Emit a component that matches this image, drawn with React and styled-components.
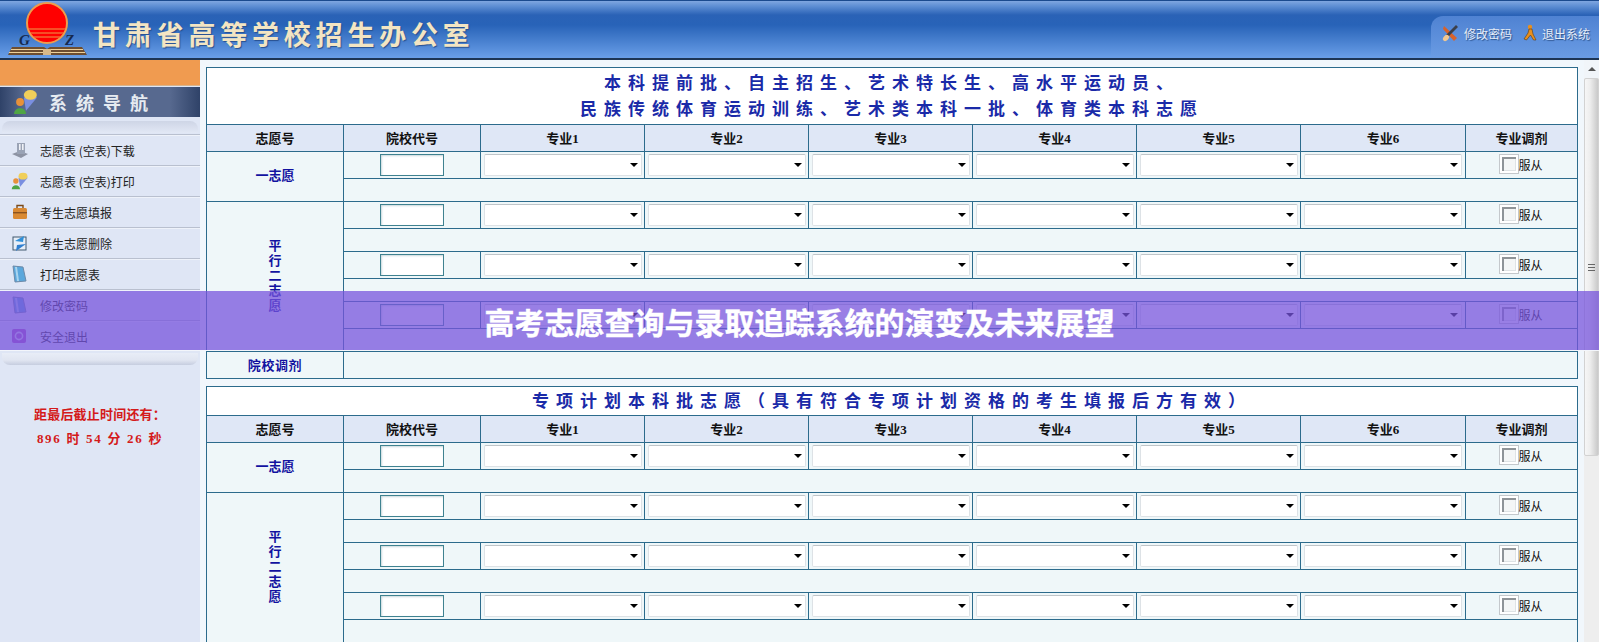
import React from 'react'
import styled, { createGlobalStyle } from 'styled-components'

const GlobalStyle = createGlobalStyle`
html, body {
    margin: 0;
    padding: 0;
    background: #f1f7fc;
}
* {
    box-sizing: border-box;
}
`

const CJK = `"Noto Sans CJK SC", "Liberation Sans", sans-serif`
const SERIF_CJK = `"Liberation Serif", "Noto Sans CJK SC", serif`

const menuItems = [
    { label: '志愿表 (空表)下载', icon: 'disk' },
    { label: '志愿表 (空表)打印', icon: 'people' },
    { label: '考生志愿填报', icon: 'case' },
    { label: '考生志愿删除', icon: 'refresh' },
    { label: '打印志愿表', icon: 'book' },
    { label: '修改密码', icon: 'book' },
    { label: '安全退出', icon: 'power' },
]

const COL_WIDTHS = [137, 137, 164, 164, 164, 164, 164, 165, 112]
const MAJORS = [1, 2, 3, 4, 5, 6]

const Logo = () => (
    <svg width="92" height="58" viewBox="0 0 92 58">
        <defs>
            <clipPath id="sun"><circle cx="47" cy="22" r="19" /></clipPath>
        </defs>
        <circle cx="47" cy="22" r="20" fill="#f00" stroke="#ee9c4c" strokeWidth="2" />
        <g clipPath="url(#sun)" stroke="#ee9c4c" strokeWidth="1.2">
            <line x1="20" y1="28" x2="75" y2="28" />
            <line x1="20" y1="32" x2="75" y2="32" />
            <line x1="20" y1="36" x2="75" y2="36" />
        </g>
        <text x="19" y="44" fontFamily="Liberation Serif" fontWeight="bold" fontStyle="italic" fontSize="15" fill="#16294d">G</text>
        <text x="65" y="44" fontFamily="Liberation Serif" fontWeight="bold" fontStyle="italic" fontSize="15" fill="#16294d">Z</text>
        <path d="M12 46 L44 46 L47 48 L50 46 L82 46 L87 54 L8 54 Z" fill="#6e4e30" />
        <path d="M11 48.5 H83 M9 51.5 H85" stroke="#ecd09a" strokeWidth="1" />
        <rect x="43" y="48" width="8" height="6" fill="#d8b888" />
    </svg>
)

const ToolsIcon = () => (
    <svg width="18" height="18" viewBox="0 0 18 18">
        <path d="M3 2 L16 14 L13 17 L2 5 Z" fill="#d9622a" />
        <path d="M15 1 L17 3 L7 13 L5 11 Z" fill="#3b3f4a" />
        <ellipse cx="5" cy="14" rx="3.5" ry="2.5" fill="#f2c890" transform="rotate(-45 5 14)" />
    </svg>
)

const RunnerIcon = () => (
    <svg width="14" height="18" viewBox="0 0 14 18">
        <circle cx="7" cy="3" r="2.2" fill="#e88f1e" />
        <path d="M6 5 L9 5 L10 10 L13 16 L10.5 16 L7.5 11 L3.5 16 L1 15 L5 9 Z" fill="#e88f1e" stroke="#5a3a10" strokeWidth=".6" />
    </svg>
)

const PeopleIcon = ({ size = 18 }) => (
    <svg width={size} height={size} viewBox="0 0 24 24">
        <path d="M10 8 L19 3 L22 8 L12 20 Z" fill="#7a8fe0" />
        <ellipse cx="16" cy="5.5" rx="6" ry="4.5" fill="#f0cf5a" />
        <circle cx="6.5" cy="12" r="3.6" fill="#e8913a" />
        <path d="M1 23 C1 16 12 16 12 23 Z" fill="#4fa544" />
    </svg>
)

const MenuIcon = ({ type }) => {
    if (type === 'people') return <PeopleIcon />
    if (type === 'disk') {
        return (
            <svg width="18" height="18" viewBox="0 0 18 18">
                <path d="M1 13 L9 10 L17 13 L10 17 Z" fill="#8d93a3" />
                <rect x="6" y="2" width="8" height="11" fill="#9aa3b5" />
                <rect x="8" y="3" width="1.6" height="6" fill="#eef1f6" />
                <rect x="11" y="3" width="1.6" height="6" fill="#eef1f6" />
            </svg>
        )
    }
    if (type === 'case') {
        return (
            <svg width="18" height="18" viewBox="0 0 18 18">
                <path d="M6 5 V2.5 H12 V5" fill="none" stroke="#7c4a18" strokeWidth="1.4" />
                <rect x="2" y="5" width="14" height="11" rx="1.5" fill="#d98a34" />
                <rect x="2" y="9" width="14" height="1.4" fill="#8a5320" />
            </svg>
        )
    }
    if (type === 'refresh') {
        return (
            <svg width="18" height="18" viewBox="0 0 18 18">
                <rect x="2" y="3" width="13" height="13" fill="#e6eef8" stroke="#40586f" />
                <path d="M4 7 L13 2 L12 8 Z" fill="#2f8fd8" />
                <path d="M15 10 L5 17 L6 11 Z" fill="#2f7fd0" />
            </svg>
        )
    }
    if (type === 'power') {
        return (
            <svg width="16" height="16" viewBox="0 0 16 16">
                <rect x="1" y="1" width="14" height="14" rx="2" fill="#b04fc0" />
                <circle cx="8" cy="8" r="3.6" fill="none" stroke="#e6d8f0" strokeWidth="1.6" />
            </svg>
        )
    }
    return (
        <svg width="16" height="18" viewBox="0 0 16 18">
            <path d="M2 1 L12 2 L15 16 L4 17 Z" fill="#5aa7dc" stroke="#6d8aa8" />
            <path d="M4 2 L6 2 L8 16 L6 16 Z" fill="#a9d5f0" />
        </svg>
    )
}

const VolunteerRow = ({ label, rows }) => (
    <>
        <HeadRow>
            {label && <LabelCell rowSpan={rows}>{label}</LabelCell>}
            <Cell><CodeInput type="text" /></Cell>
            {MAJORS.map((m) => (
                <Cell key={m}>
                    <SelectBox><select /></SelectBox>
                </Cell>
            ))}
            <Cell>
                <ObeyLabel><input type="checkbox" />服从</ObeyLabel>
            </Cell>
        </HeadRow>
        <SubRow><Cell colSpan={8} /></SubRow>
    </>
)

const VolunteerTable = ({ tall, title, adjust }) => (
    <Table>
        <colgroup>
            {COL_WIDTHS.map((w, i) => <col key={i} width={w} />)}
        </colgroup>
        <tbody>
            <TitleRow $tall={tall}>
                <TitleCell colSpan={9}>{title}</TitleCell>
            </TitleRow>
            <HeadRow>
                <HeadCell>志愿号</HeadCell>
                <HeadCell>院校代号</HeadCell>
                {MAJORS.map((m) => <HeadCell key={m}>专业{m}</HeadCell>)}
                <HeadCell>专业调剂</HeadCell>
            </HeadRow>
            <VolunteerRow label="一志愿" rows={2} />
            <VolunteerRow label={<>平<br />行<br />二<br />志<br />愿</>} rows={6} />
            <VolunteerRow />
            <VolunteerRow />
            {adjust && (
                <HeadRow>
                    <LabelCell $wide>院校调剂</LabelCell>
                    <Cell colSpan={8} />
                </HeadRow>
            )}
        </tbody>
    </Table>
)

const App = () => {
    return (
        <Page>
            <GlobalStyle />
            <Header>
                <LogoBox><Logo /></LogoBox>
                <SiteName>甘肃省高等学校招生办公室</SiteName>
                <TopTab>
                    <TopLink><ToolsIcon />修改密码</TopLink>
                    <TopLink><RunnerIcon />退出系统</TopLink>
                </TopTab>
            </Header>
            <Main>
                <Sidebar>
                    <OrangeBlock />
                    <NavTitle><PeopleIcon size={26} /><NavText>系统导航</NavText></NavTitle>
                    <RoundBar />
                    <Menu>
                        {menuItems.map((item) => (
                            <MenuItem key={item.label}>
                                <IconSlot><MenuIcon type={item.icon} /></IconSlot>
                                {item.label}
                            </MenuItem>
                        ))}
                    </Menu>
                    <RoundBar $bottom />
                    <Countdown>
                        <CountLine>距最后截止时间还有：</CountLine>
                        <CountLine $wide>896 时 54 分 26 秒</CountLine>
                    </Countdown>
                </Sidebar>
                <Content>
                    <VolunteerTable
                        tall
                        adjust
                        title={<>本科提前批、自主招生、艺术特长生、高水平运动员、<br />民族传统体育运动训练、艺术类本科一批、体育类本科志愿</>}
                    />
                    <VolunteerTable title="专项计划本科批志愿（具有符合专项计划资格的考生填报后方有效）" />
                </Content>
                <ScrollBar>
                    <ScrollArrow />
                    <ScrollThumb><Grip /></ScrollThumb>
                </ScrollBar>
            </Main>
            <Banner>高考志愿查询与录取追踪系统的演变及未来展望</Banner>
        </Page>
    )
}

export default App

const Page = styled.div`
position: relative;
width: 1599px;
height: 642px;
overflow: hidden;
font-family: ${CJK};
background: #f1f7fc;
`

const Header = styled.header`
position: relative;
display: flex;
align-items: center;
height: 60px;
border-top: 1px solid #1b4a8e;
border-bottom: 2px solid #1d3554;
background: linear-gradient(180deg, #7fa6e0 0, #5f8fd4 5px, #2a62b6 14px, #2863b8 24px, #6a9fe8 100%);
`

const LogoBox = styled.div`
display: flex;
width: 94px;
height: 57px;
flex: none;
`

const SiteName = styled.div`
font-size: 27px;
font-weight: 700;
letter-spacing: 4.8px;
color: #f3e5c3;
text-shadow: 1px 1px 1px #28508f;
margin-top: 8px;
margin-left: -1px;
white-space: nowrap;
`

const TopTab = styled.div`
display: flex;
align-items: center;
gap: 11px;
height: 42px;
margin-left: auto;
margin-top: 15px;
padding: 0 8px 8px 10px;
width: 168px;
border-top-left-radius: 12px;
background: linear-gradient(180deg, #4f82d2 0, #6a9ce4 100%);
`

const TopLink = styled.div`
display: flex;
align-items: center;
gap: 5px;
font-size: 12px;
color: #e6edf7;
text-shadow: 1px 1px 1px #2a4f88;
white-space: nowrap;
`

const Main = styled.div`
display: flex;
height: 582px;
`

const Sidebar = styled.aside`
display: flex;
flex-direction: column;
width: 200px;
flex: none;
background: #dfe6f5;
`

const OrangeBlock = styled.div`
height: 26px;
flex: none;
background: #f09b50;
border-bottom: 1px solid #d8b48c;
`

const NavTitle = styled.div`
display: flex;
align-items: center;
gap: 10px;
height: 30px;
flex: none;
margin-top: 1px;
padding-left: 13px;
background: linear-gradient(90deg, #2f4268 0, #57698f 12%, #57698f 85%, #2f4268 100%);
`

const NavText = styled.span`
font-size: 18px;
font-weight: 700;
letter-spacing: 9px;
color: #e6ebf1;
white-space: nowrap;
`

const RoundBar = styled.div`
height: 12px;
flex: none;
margin: ${(p) => (p.$bottom ? '2px 2px 0' : '4px 2px 0')};
border-radius: ${(p) => (p.$bottom ? '0 0 8px 8px' : '8px 8px 0 0')};
background: ${(p) => (p.$bottom
        ? 'linear-gradient(180deg, #e8edf7 0, #e0e5f1 60%, #c6cddf 100%)'
        : 'linear-gradient(180deg, #ced5e6 0, #e2e8f5 100%)')};
`

const Menu = styled.nav`
display: flex;
flex-direction: column;
margin-top: 1px;
`

const MenuItem = styled.div`
display: flex;
align-items: center;
height: 31px;
padding-left: 11px;
font-size: 12px;
color: #222;
border-top: 1px solid #b9c0cf;
box-shadow: inset 0 1px 0 #eef2fa;
white-space: pre;
`

const IconSlot = styled.span`
display: flex;
width: 29px;
flex: none;
`

const Countdown = styled.div`
display: flex;
flex-direction: column;
align-items: center;
gap: 7px;
margin-top: 41px;
`

const CountLine = styled.div`
font-family: ${SERIF_CJK};
font-size: 13px;
font-weight: 700;
line-height: 17px;
letter-spacing: ${(p) => (p.$wide ? '1.7px' : '.2px')};
color: #d41a1a;
white-space: pre;
`

const Content = styled.main`
display: flex;
flex-direction: column;
gap: 7px;
width: 1384px;
flex: none;
padding: 7px 0 0 6px;
overflow: hidden;
`

const Table = styled.table`
border-collapse: collapse;
table-layout: fixed;
width: 1371px;
flex: none;
`

const Cell = styled.td`
padding: 0;
border: 1px solid #2c6b8c;
background: #eff7f9;
text-align: center;
vertical-align: middle;
`

const TitleRow = styled.tr`
height: ${(p) => (p.$tall ? '57px' : '28px')};
`

const TitleCell = styled(Cell)`
padding-bottom: 2px;
background: #fff;
font-size: 17px;
font-weight: 700;
letter-spacing: 7px;
line-height: 26px;
color: #1a2aa8;
white-space: nowrap;
`

const HeadRow = styled.tr`
height: 27px;
`

const SubRow = styled.tr`
height: 23px;
`

const HeadCell = styled(Cell).attrs({ as: 'th' })`
padding-bottom: 2px;
background: #dfe7f6;
font-family: ${SERIF_CJK};
font-size: 13px;
font-weight: 700;
color: #111;
`

const LabelCell = styled(Cell)`
padding-bottom: ${(p) => (p.$wide ? '2px' : '4px')};
font-size: 13px;
font-weight: 700;
line-height: 15px;
color: #1212a0;
letter-spacing: ${(p) => (p.$wide ? '.6px' : '0')};
`

const CodeInput = styled.input`
display: block;
width: 64px;
height: 22px;
margin: 0 auto;
border: 1.5px solid #3f8290;
background: #fff;
box-shadow: inset 1px 1px 2px #c8d8dc;
outline: none;
`

const SelectBox = styled.div`
position: relative;
width: 158px;
height: 22px;
margin: 0 auto;

select {
    display: block;
    width: 100%;
    height: 100%;
    appearance: none;
    border: 1px solid #dde2e6;
    border-top-color: #bfc5c9;
    border-radius: 2px;
    background: #fff;
    outline: none;
}

&::after {
    content: '';
    position: absolute;
    right: 4px;
    top: 9px;
    border-left: 4px solid transparent;
    border-right: 4px solid transparent;
    border-top: 4px solid #000;
}
`

const ObeyLabel = styled.label`
display: flex;
align-items: center;
justify-content: center;
font-size: 12px;
line-height: 16px;
color: #111;
padding-right: 2px;

input {
    appearance: none;
    flex: none;
    width: 20px;
    height: 20px;
    margin: 0 0 2px;
    border: 1px solid #c4c8cc;
    background: #f4f6f6;
    box-shadow: inset 0 0 0 2px #fff, inset 4px 4px 0 #8f9498, inset -3px -3px 0 #dfe3e5;
}
`

const ScrollBar = styled.div`
display: flex;
flex-direction: column;
width: 15px;
flex: none;
background: #eeeeee;
`

const ScrollArrow = styled.div`
position: relative;
height: 18px;
flex: none;
background: #f1f5f9;

&::after {
    content: '';
    position: absolute;
    left: 4px;
    top: 7px;
    border-left: 4px solid transparent;
    border-right: 4px solid transparent;
    border-bottom: 4px solid #555;
}
`

const ScrollThumb = styled.div`
display: flex;
align-items: center;
justify-content: center;
height: 378px;
flex: none;
border-radius: 2px;
background: linear-gradient(90deg, #f6f6f6 0, #ededed 40%, #c9c9c9 100%);
border: 1px solid #d2d2d2;
`

const Grip = styled.div`
width: 7px;
height: 7px;
border-top: 1px solid #666;
border-bottom: 1px solid #666;
background: linear-gradient(180deg, transparent 2px, #666 2px, #666 3px, transparent 3px);
`

const Banner = styled.div`
position: absolute;
left: 0;
right: 0;
top: 291px;
height: 59px;
display: flex;
align-items: center;
justify-content: center;
background: rgba(119, 84, 220, 0.75);
box-shadow: 0 1px 0 #f3f6fb;
font-size: 30px;
font-weight: 700;
-webkit-text-stroke: .4px #fff;
color: #fff;
white-space: nowrap;
`
